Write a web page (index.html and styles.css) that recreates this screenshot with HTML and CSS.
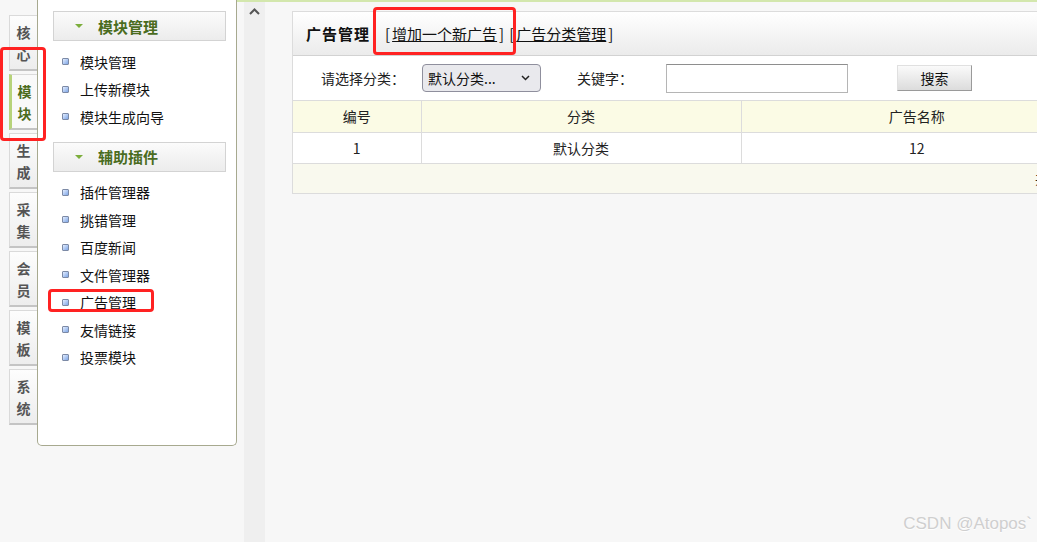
FILE: index.html
```html
<!DOCTYPE html>
<html lang="zh-CN">
<head>
    <meta charset="UTF-8">
    <title>广告管理</title>
    <link rel="stylesheet" href="styles.css">
</head>
<body>
    <div class="layout">
        <div class="tabs">
            <div class="tab">核<br>心</div>
            <div class="tab active">模<br>块</div>
            <div class="tab">生<br>成</div>
            <div class="tab">采<br>集</div>
            <div class="tab">会<br>员</div>
            <div class="tab">模<br>板</div>
            <div class="tab">系<br>统</div>
        </div>

        <div class="side">
            <div class="group-title"><span class="arrow"></span>模块管理</div>
            <ul class="menu">
                <li><span class="dot"></span>模块管理</li>
                <li><span class="dot"></span>上传新模块</li>
                <li><span class="dot"></span>模块生成向导</li>
            </ul>
            <div class="group-title"><span class="arrow"></span>辅助插件</div>
            <ul class="menu">
                <li><span class="dot"></span>插件管理器</li>
                <li><span class="dot"></span>挑错管理</li>
                <li><span class="dot"></span>百度新闻</li>
                <li><span class="dot"></span>文件管理器</li>
                <li><span class="dot"></span>广告管理</li>
                <li><span class="dot"></span>友情链接</li>
                <li><span class="dot"></span>投票模块</li>
            </ul>
        </div>

        <div class="content">
            <div class="gap"></div>
            <div class="splitter">
                <svg width="11" height="7" viewBox="0 0 11 7"><polyline points="1,6 5.5,1.5 10,6" fill="none" stroke="#555" stroke-width="2"/></svg>
            </div>
            <div class="main">
                <div class="panel">
                    <div class="panel-head">
                        <b class="title">广告管理</b>
                        <span class="link">[<u>增加一个新广告</u>]</span>
                        <span class="link">[<u>广告分类管理</u>]</span>
                    </div>
                    <div class="search">
                        <span>请选择分类：</span>
                        <div class="select-box">
                            <span>默认分类...</span>
                            <svg width="9" height="6" viewBox="0 0 9 6"><polyline points="1,1 4.5,4.5 8,1" fill="none" stroke="#222" stroke-width="1.5"/></svg>
                        </div>
                        <span class="kw">关键字：</span>
                        <div class="text-input"></div>
                        <div class="btn">搜索</div>
                    </div>
                    <table class="grid">
                        <tr class="head">
                            <td class="c1">编号</td>
                            <td class="c2">分类</td>
                            <td>广告名称</td>
                        </tr>
                        <tr>
                            <td>1</td>
                            <td>默认分类</td>
                            <td>12</td>
                        </tr>
                        <tr class="foot">
                            <td colspan="3"><span class="pager">共1条</span></td>
                        </tr>
                    </table>
                </div>
            </div>
        </div>
    </div>

    <div class="mark mark-tab"></div>
    <div class="mark mark-menu"></div>
    <div class="mark mark-link"></div>
    <div class="watermark">CSDN @Atopos`</div>
</body>
</html>
```

FILE: styles.css
```css
body {
    margin: 0;
    height: 542px;
    overflow: hidden;
    background: #f7f7f7;
    font-family: "Noto Sans CJK SC", "Noto Sans", sans-serif;
    font-size: 14px;
    color: #111;
    position: relative;
}

.layout {
    display: flex;
    height: 542px;
}

/* left vertical tabs */
.tabs {
    width: 37px;
    flex-shrink: 0;
    padding-top: 15px;
    box-sizing: border-box;
}

.tab {
    width: 28px;
    height: 56px;
    margin: 0 0 3px 9px;
    box-sizing: border-box;
    border: 1px solid #dadada;
    border-right: none;
    border-bottom: 2px solid #c4c4c4;
    background: linear-gradient(#fdfdfd, #ededed);
    padding-top: 5px;
    text-align: center;
    line-height: 22px;
    font-weight: bold;
    color: #555;
}

.tab.active {
    border-left: 3px solid #b7d37a;
    background: #f9f9f9;
    color: #4b6b1c;
}

/* menu panel */
.side {
    width: 200px;
    height: 446px;
    flex-shrink: 0;
    box-sizing: border-box;
    background: #fff;
    border: 1px solid #a7a98f;
    border-top: none;
    border-radius: 0 0 5px 5px;
    padding: 11px 10px 0 15px;
}

.group-title {
    height: 30px;
    box-sizing: border-box;
    border: 1px solid #d3d3d3;
    background: linear-gradient(#fbfbfb, #ececec);
    display: flex;
    align-items: center;
    padding-left: 21px;
    font-size: 15px;
    font-weight: bold;
    color: #4a6c1f;
}

.arrow {
    width: 0;
    height: 0;
    border-left: 4px solid transparent;
    border-right: 4px solid transparent;
    border-top: 4px solid #7cae3c;
    margin-right: 15px;
}

.menu {
    list-style: none;
    margin: 7px 0 11px;
    padding: 0 0 0 9px;
}

.menu li {
    height: 27.5px;
    display: flex;
    align-items: center;
    color: #111;
}

.dot {
    width: 5px;
    height: 5px;
    border: 1px solid #7c8aa6;
    border-radius: 1px;
    background: linear-gradient(135deg, #e4eeff, #7fa6e6);
    margin-right: 11px;
}

/* right side */
.content {
    flex: 1;
    display: flex;
    min-width: 0;
    border-top: 2px solid #d3e7ad;
}

.gap {
    width: 7px;
    flex-shrink: 0;
}

.splitter {
    width: 21px;
    flex-shrink: 0;
    background: #efefef;
    padding: 6px 0 0 5px;
    box-sizing: border-box;
}

.splitter svg {
    display: block;
}

.main {
    flex: 1;
    min-width: 0;
    overflow: hidden;
    padding: 9px 0 0 27px;
}

.panel {
    width: 800px;
    background: #fff;
    border: 1px solid #dcdcdc;
}

.panel-head {
    height: 44px;
    box-sizing: border-box;
    display: flex;
    align-items: center;
    padding-left: 13px;
    background: linear-gradient(#ffffff, #ebebeb);
    border-bottom: 1px solid #d2d2d2;
    font-size: 15px;
    color: #111;
}

.title {
    margin-right: 15px;
    letter-spacing: 1px;
}

.link {
    margin-right: 5px;
}

.link u {
    margin: 0 2px;
}

.search {
    height: 45px;
    box-sizing: border-box;
    display: flex;
    align-items: center;
    padding-left: 28px;
    border-bottom: 1px solid #dcdcdc;
    color: #222;
}

.select-box {
    width: 119px;
    height: 28px;
    box-sizing: border-box;
    margin-left: 17px;
    border: 1px solid #8f8f9d;
    border-radius: 4px;
    background: #e9e9ed;
    display: flex;
    align-items: center;
    justify-content: space-between;
    padding: 0 10px 0 5px;
    color: #111;
}

.kw {
    margin-left: 36px;
}

.text-input {
    width: 182px;
    height: 29px;
    box-sizing: border-box;
    margin-left: 33px;
    border: 1px solid #b5b5b5;
    border-top-color: #8e8e8e;
    background: #fff;
}

.btn {
    width: 75px;
    height: 26px;
    box-sizing: border-box;
    margin-left: 49px;
    border: 1px solid #9a9a9a;
    border-top-color: #e0e0e0;
    border-left-color: #e0e0e0;
    background: linear-gradient(#fafafa, #dcdcdc);
    text-align: center;
    line-height: 24px;
    color: #111;
}

.grid {
    width: 100%;
    border-collapse: collapse;
    color: #222;
}

.grid td {
    height: 31px;
    padding: 0;
    box-sizing: border-box;
    text-align: center;
    border-right: 1px solid #dcdcdc;
    border-bottom: 1px solid #dcdcdc;
}

.grid .c1 {
    width: 128px;
}

.grid .c2 {
    width: 320px;
}

.grid .head td {
    background: #fbfbe5;
}

.grid .foot td {
    height: 30px;
    border-bottom: none;
    background: #f9f9ee;
    text-align: left;
    white-space: nowrap;
}

.pager {
    margin-left: 742px;
}

/* annotations over the screenshot */
.mark {
    position: absolute;
    border: 3px solid #ff2222;
    border-radius: 4px;
    box-sizing: border-box;
}

.mark-tab {
    left: 0;
    top: 47px;
    width: 46px;
    height: 94px;
}

.mark-menu {
    left: 48px;
    top: 289px;
    width: 106px;
    height: 23px;
}

.mark-link {
    left: 373px;
    top: 7px;
    width: 143px;
    height: 48px;
}

.watermark {
    position: absolute;
    right: 5px;
    bottom: 8px;
    font-family: "Liberation Sans", Arial, sans-serif;
    font-size: 17px;
    color: #cfcfcf;
    text-shadow: 0 1px 1px #fff;
}
```
